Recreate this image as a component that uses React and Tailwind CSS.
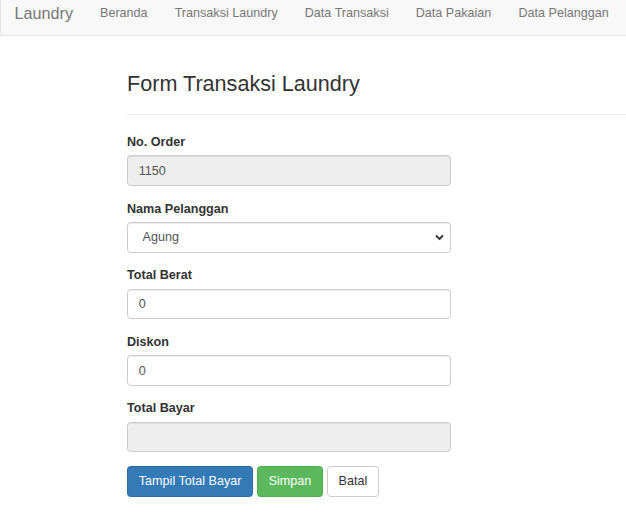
import React from "react";

const font = { fontFamily: '"Liberation Sans", Arial, Helvetica, sans-serif' };

function Label({ children }) {
  return (
    <label className="block text-[12.6px] leading-[18px] font-bold text-[#333] mb-[4.5px]">
      {children}
    </label>
  );
}

function Input({ value, disabled }) {
  return (
    <input
      readOnly
      value={value}
      className={`block w-full h-[30.6px] px-[10.8px] text-[12.6px] text-[#555] border border-[#ccc] rounded-[3.6px] shadow-[inset_0_1px_1px_rgba(0,0,0,0.075)] outline-none ${
        disabled ? "bg-[#eee]" : "bg-white"
      }`}
    />
  );
}

export default function App() {
  const links = ["Beranda", "Transaksi Laundry", "Data Transaksi", "Data Pakaian", "Data Pelanggan"];
  return (
    <div className="w-[626px] h-[532px] bg-white overflow-hidden" style={font}>
      <nav className="h-[36px] w-[700px] bg-[#f8f8f8] border-l border-b border-[#e7e7e7] rounded-bl-[3.6px] flex items-start">
        <span className="pl-[13.5px] pr-[13.5px] text-[16.2px] leading-[26px] text-[#777]">Laundry</span>
        <ul className="flex">
          {links.map((l) => (
            <li key={l} className="px-[13.5px] text-[12.6px] leading-[26px] text-[#777] whitespace-nowrap">
              {l}
            </li>
          ))}
        </ul>
      </nav>
      <div className="pl-[127px]">
        <h3 className="mt-[35.7px] text-[21.6px] leading-[23.76px] text-[#333] font-normal mb-[18.5px]">
          Form Transaksi Laundry
        </h3>
        <hr className="border-0 border-t border-[#eee] mb-[18px]" />
        <div className="w-[324px]">
          <div className="mb-[13.5px]">
            <Label>No. Order</Label>
            <Input value="1150" disabled />
          </div>
          <div className="mb-[13.5px]">
            <Label>Nama Pelanggan</Label>
            <div className="relative">
              <div className="flex items-center w-full h-[30.6px] pl-[14.5px] text-[12.6px] text-[#555] border border-[#ccc] rounded-[3.6px] bg-white shadow-[inset_0_1px_1px_rgba(0,0,0,0.075)]">
                Agung
              </div>
              <svg
                className="absolute right-[7px] top-[12px]"
                width="9"
                height="7"
                viewBox="0 0 9 7"
              >
                <path d="M1 1.5 L4.5 5 L8 1.5" fill="none" stroke="#333" strokeWidth="1.8" />
              </svg>
            </div>
          </div>
          <div className="mb-[13.5px]">
            <Label>Total Berat</Label>
            <Input value="0" />
          </div>
          <div className="mb-[13.5px]">
            <Label>Diskon</Label>
            <Input value="0" />
          </div>
          <div className="mb-[13.5px]">
            <Label>Total Bayar</Label>
            <Input value="" disabled />
          </div>
          <div className="flex gap-[3.6px]">
            <button className="h-[30.6px] px-[10.8px] text-[12.6px] text-white bg-[#337ab7] border border-[#2e6da4] rounded-[3.6px]">
              Tampil Total Bayar
            </button>
            <button className="h-[30.6px] px-[10.8px] text-[12.6px] text-white bg-[#5cb85c] border border-[#4cae4c] rounded-[3.6px]">
              Simpan
            </button>
            <button className="h-[30.6px] px-[10.8px] text-[12.6px] text-[#333] bg-white border border-[#ccc] rounded-[3.6px]">
              Batal
            </button>
          </div>
        </div>
      </div>
    </div>
  );
}
